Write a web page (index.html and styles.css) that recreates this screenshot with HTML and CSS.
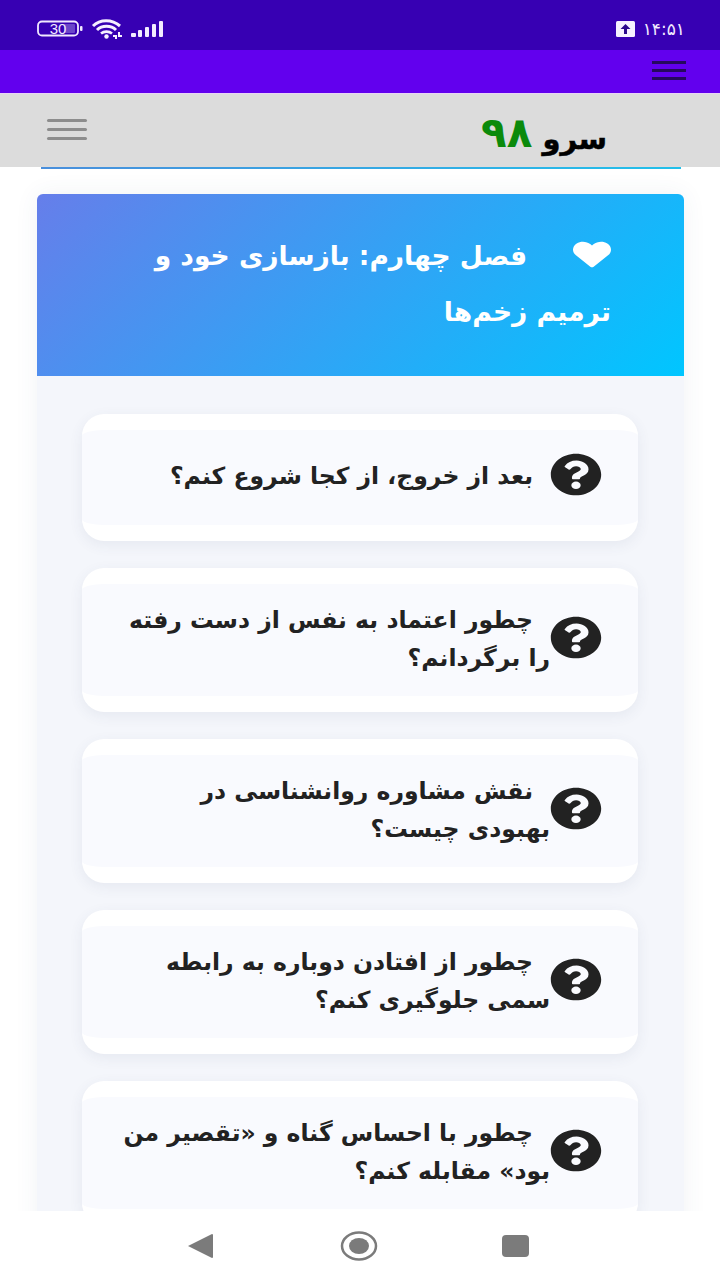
FILE: index.html
```html
<!DOCTYPE html>
<html lang="fa" dir="rtl">
<head>
  <meta charset="UTF-8">
  <title>سرو ۹۸</title>
  <link rel="stylesheet" href="styles.css">
</head>
<body>

  <div class="status-bar">
    <div class="status-left">
      <svg class="battery" width="46" height="18" viewBox="0 0 46 18">
        <rect x="1" y="1.5" width="40" height="14" rx="4" fill="none" stroke="#f1e9ff" stroke-width="1.8"/>
        <rect x="27" y="4" width="11" height="9" rx="1" fill="#6b45c9"/>
        <rect x="43" y="6" width="2.5" height="5" rx="1" fill="#f1e9ff"/>
        <text x="21" y="14" text-anchor="middle" class="battery-text">30</text>
      </svg>
      <svg class="wifi" width="32" height="20" viewBox="0 0 32 20">
        <path d="M2 7 C9 0 21 0 29 7" fill="none" stroke="#f6f0ff" stroke-width="3"/>
        <path d="M6 11 C11 6 20 6 25 11" fill="none" stroke="#f6f0ff" stroke-width="3"/>
        <path d="M10 14.5 C13 12 18 12 21 14.5" fill="none" stroke="#f6f0ff" stroke-width="2.6"/>
        <circle cx="15.5" cy="17.5" r="2.2" fill="#f6f0ff"/>
        <path d="M22 16h4v4h-2v-2h-2zM27 13h2v3h2v2h-4z" fill="#f6f0ff"/>
      </svg>
      <svg class="signal" width="33" height="18" viewBox="0 0 33 18">
        <rect x="0" y="13" width="5" height="4" rx="1" fill="#f3ecff"/>
        <rect x="7" y="10" width="4" height="7" rx="1" fill="#f3ecff"/>
        <rect x="14" y="7" width="4" height="10" rx="1" fill="#f3ecff"/>
        <rect x="21" y="4" width="4" height="13" rx="1" fill="#f3ecff"/>
        <rect x="28" y="1" width="4" height="16" rx="1" fill="#f3ecff"/>
      </svg>
    </div>
    <div class="status-right">
      <svg width="19" height="16" viewBox="0 0 19 16">
        <rect width="19" height="16" rx="1.5" fill="#f6f1ff"/>
        <path d="M9.5 3 L14.5 8 H11 V13 H8 V8 H4.5 Z" fill="#2c0a8c"/>
      </svg>
      <span class="clock">۱۴:۵۱</span>
    </div>
  </div>

  <div class="toolbar">
    <div class="menu-icon menu-dark"><span></span><span></span><span></span></div>
  </div>

  <header class="site-header">
    <div class="logo">سرو <span class="logo-num">۹۸</span></div>
    <div class="menu-icon menu-gray"><span></span><span></span><span></span></div>
  </header>

  <main class="content">
    <div class="prev-edge"></div>

    <section class="chapter">
      <h2 class="chapter-title">
        <svg class="heart" viewBox="0 0 512 512" preserveAspectRatio="none"><path d="M462.3 62.6C407.5 15.9 326 24.3 275.7 76.2L256 96.5l-19.7-20.3C186.1 24.3 104.5 15.9 49.7 62.6c-62.8 53.6-66.1 149.8-9.9 207.9l193.5 199.8c12.5 12.9 32.8 12.9 45.3 0l193.5-199.8c56.3-58.1 53-154.3-9.8-207.9z"/></svg>فصل چهارم: بازسازی خود و ترمیم زخم‌ها
      </h2>

      <div class="questions">
        <a class="card">
          <svg class="q-icon" viewBox="0 0 512 512" preserveAspectRatio="none"><path d="M504 256c0 136.997-111.043 248-248 248S8 392.997 8 256C8 119.083 119.043 8 256 8s248 111.083 248 248zM262.655 90c-54.497 0-89.255 22.957-116.549 63.758-3.536 5.286-2.353 12.415 2.715 16.258l34.699 26.31c5.205 3.947 12.621 3.008 16.665-2.122 17.864-22.658 30.113-35.797 57.303-35.797 20.429 0 45.698 13.148 45.698 32.958 0 14.976-12.363 22.667-32.534 33.976C247.128 238.528 216 254.941 216 296v4c0 6.627 5.373 12 12 12h56c6.627 0 12-5.373 12-12v-1.333c0-28.462 83.186-29.647 83.186-106.667 0-58.002-60.165-102-116.531-102zM256 338c-25.365 0-46 20.635-46 46 0 25.364 20.635 46 46 46s46-20.636 46-46c0-25.365-20.635-46-46-46z"/></svg>
          <p>بعد از خروج، از کجا شروع کنم؟</p>
        </a>
        <a class="card">
          <svg class="q-icon" viewBox="0 0 512 512" preserveAspectRatio="none"><path d="M504 256c0 136.997-111.043 248-248 248S8 392.997 8 256C8 119.083 119.043 8 256 8s248 111.083 248 248zM262.655 90c-54.497 0-89.255 22.957-116.549 63.758-3.536 5.286-2.353 12.415 2.715 16.258l34.699 26.31c5.205 3.947 12.621 3.008 16.665-2.122 17.864-22.658 30.113-35.797 57.303-35.797 20.429 0 45.698 13.148 45.698 32.958 0 14.976-12.363 22.667-32.534 33.976C247.128 238.528 216 254.941 216 296v4c0 6.627 5.373 12 12 12h56c6.627 0 12-5.373 12-12v-1.333c0-28.462 83.186-29.647 83.186-106.667 0-58.002-60.165-102-116.531-102zM256 338c-25.365 0-46 20.635-46 46 0 25.364 20.635 46 46 46s46-20.636 46-46c0-25.365-20.635-46-46-46z"/></svg>
          <p>چطور اعتماد به نفس از دست رفته را برگردانم؟</p>
        </a>
        <a class="card">
          <svg class="q-icon" viewBox="0 0 512 512" preserveAspectRatio="none"><path d="M504 256c0 136.997-111.043 248-248 248S8 392.997 8 256C8 119.083 119.043 8 256 8s248 111.083 248 248zM262.655 90c-54.497 0-89.255 22.957-116.549 63.758-3.536 5.286-2.353 12.415 2.715 16.258l34.699 26.31c5.205 3.947 12.621 3.008 16.665-2.122 17.864-22.658 30.113-35.797 57.303-35.797 20.429 0 45.698 13.148 45.698 32.958 0 14.976-12.363 22.667-32.534 33.976C247.128 238.528 216 254.941 216 296v4c0 6.627 5.373 12 12 12h56c6.627 0 12-5.373 12-12v-1.333c0-28.462 83.186-29.647 83.186-106.667 0-58.002-60.165-102-116.531-102zM256 338c-25.365 0-46 20.635-46 46 0 25.364 20.635 46 46 46s46-20.636 46-46c0-25.365-20.635-46-46-46z"/></svg>
          <p>نقش مشاوره روانشناسی در بهبودی چیست؟</p>
        </a>
        <a class="card">
          <svg class="q-icon" viewBox="0 0 512 512" preserveAspectRatio="none"><path d="M504 256c0 136.997-111.043 248-248 248S8 392.997 8 256C8 119.083 119.043 8 256 8s248 111.083 248 248zM262.655 90c-54.497 0-89.255 22.957-116.549 63.758-3.536 5.286-2.353 12.415 2.715 16.258l34.699 26.31c5.205 3.947 12.621 3.008 16.665-2.122 17.864-22.658 30.113-35.797 57.303-35.797 20.429 0 45.698 13.148 45.698 32.958 0 14.976-12.363 22.667-32.534 33.976C247.128 238.528 216 254.941 216 296v4c0 6.627 5.373 12 12 12h56c6.627 0 12-5.373 12-12v-1.333c0-28.462 83.186-29.647 83.186-106.667 0-58.002-60.165-102-116.531-102zM256 338c-25.365 0-46 20.635-46 46 0 25.364 20.635 46 46 46s46-20.636 46-46c0-25.365-20.635-46-46-46z"/></svg>
          <p>چطور از افتادن دوباره به رابطه سمی جلوگیری کنم؟</p>
        </a>
        <a class="card">
          <svg class="q-icon" viewBox="0 0 512 512" preserveAspectRatio="none"><path d="M504 256c0 136.997-111.043 248-248 248S8 392.997 8 256C8 119.083 119.043 8 256 8s248 111.083 248 248zM262.655 90c-54.497 0-89.255 22.957-116.549 63.758-3.536 5.286-2.353 12.415 2.715 16.258l34.699 26.31c5.205 3.947 12.621 3.008 16.665-2.122 17.864-22.658 30.113-35.797 57.303-35.797 20.429 0 45.698 13.148 45.698 32.958 0 14.976-12.363 22.667-32.534 33.976C247.128 238.528 216 254.941 216 296v4c0 6.627 5.373 12 12 12h56c6.627 0 12-5.373 12-12v-1.333c0-28.462 83.186-29.647 83.186-106.667 0-58.002-60.165-102-116.531-102zM256 338c-25.365 0-46 20.635-46 46 0 25.364 20.635 46 46 46s46-20.636 46-46c0-25.365-20.635-46-46-46z"/></svg>
          <p>چطور با احساس گناه و «تقصیر من بود» مقابله کنم؟</p>
        </a>
      </div>
    </section>
  </main>

  <nav class="nav-bar">
    <svg width="28" height="26" viewBox="0 0 28 26"><path d="M1 13 L25 1 Q26 1 26 2 V24 Q26 25 25 25 Z" fill="#7b7b7b"/></svg>
    <svg width="38" height="30" viewBox="0 0 38 30"><ellipse cx="19" cy="15" rx="17" ry="13.5" fill="none" stroke="#7b7b7b" stroke-width="2.5"/><ellipse cx="19" cy="15" rx="10" ry="8" fill="#7b7b7b"/></svg>
    <svg width="27" height="22" viewBox="0 0 27 22"><rect width="27" height="22" rx="4" fill="#7b7b7b"/></svg>
  </nav>

</body>
</html>
```

FILE: styles.css
```css
* {
  box-sizing: border-box;
}

body {
  margin: 0;
  height: 1280px;
  display: flex;
  flex-direction: column;
  overflow: hidden;
  background-color: #fff;
  color: #222;
  font-family: "DejaVu Sans", "Noto Sans", sans-serif;
}

/* Phone status bar */
.status-bar {
  height: 50px;
  flex-shrink: 0;
  padding: 0 35px 0 37px;
  display: flex;
  direction: ltr;
  align-items: center;
  justify-content: space-between;
  background-color: #3700b3;
}

.status-left {
  display: flex;
  align-items: center;
  gap: 8px;
  margin-top: 8px;
}

.status-right {
  display: flex;
  align-items: center;
  gap: 8px;
  margin-top: 7px;
}

.battery-text {
  font-family: "Liberation Sans", sans-serif;
  font-size: 15px;
  fill: #f1e9ff;
}

.clock {
  color: #f1e9ff;
  font-size: 17px;
  line-height: 18px;
}

.toolbar {
  height: 43px;
  flex-shrink: 0;
  padding: 11px 34px 0;
  background-color: #6200ee;
}

/* Hamburger icons */
.menu-icon {
  width: 34px;
  display: flex;
  flex-direction: column;
  gap: 5px;
}

.menu-icon span {
  height: 3px;
  background-color: #26095e;
}

.menu-gray {
  width: 40px;
  gap: 6px;
}

.menu-gray span {
  background-color: #8d8d8d;
  border-radius: 2px;
}

/* Site header */
.site-header {
  height: 74px;
  flex-shrink: 0;
  padding: 0 113px 0 47px;
  display: flex;
  align-items: center;
  justify-content: space-between;
  background-color: #dcdcdc;
  border-top: 1px solid #e8d4f6;
}

.logo {
  color: #000;
  font-size: 29px;
  font-weight: bold;
  line-height: 44px;
  margin-top: 16px;
  -webkit-text-stroke: 0.5px #000;
}

.logo-num {
  color: #0b8a0b;
  font-size: 42px;
  line-height: 30px;
  -webkit-text-stroke: 0;
  vertical-align: 2px;
}

.site-header .menu-icon {
  margin-bottom: 2px;
}

/* Page content */
.content {
  flex: 1;
  min-height: 0;
  overflow: hidden;
  padding: 0 36px 0 37px;
}

.prev-edge {
  height: 2px;
  margin: 0 3px 25px 4px;
  background: linear-gradient(to left, #22c0ea, #4a8fdc);
}

.chapter {
  background-color: #f4f6fb;
  box-shadow: 0 0 24px rgba(60, 80, 120, 0.07);
  border-radius: 6px 6px 0 0;
  min-height: 1100px;
}

.chapter-title {
  margin: 0;
  height: 182px;
  padding: 34px 73px 0 60px;
  color: #fff;
  font-size: 26.5px;
  font-weight: bold;
  line-height: 56px;
  border-radius: 6px 6px 0 0;
  background: linear-gradient(135deg, #667eea, #00c6ff);
}

.heart {
  width: 38px;
  height: 29px;
  fill: #fff;
  margin-left: 46px;
  vertical-align: -4px;
}

.questions {
  padding: 38px 46px 0 45px;
  display: flex;
  flex-direction: column;
  gap: 27px;
}

.card {
  min-height: 127px;
  padding: 16.5px 36px;
  display: flex;
  align-items: center;
  background-color: #f9fafe;
  border-top: 16px solid #fff;
  border-bottom: 16px solid #fff;
  border-radius: 22px;
  box-shadow: 0 4px 14px rgba(60, 80, 120, 0.08);
}

.q-icon {
  width: 52px;
  height: 43px;
  flex-shrink: 0;
  fill: #222;
  margin-bottom: 6px;
}

.card p {
  margin: 0 0 3px;
  font-size: 23.5px;
  font-weight: bold;
  line-height: 38px;
  text-indent: 17px;
}

/* Phone navigation bar */
.nav-bar {
  height: 69px;
  flex-shrink: 0;
  padding: 0 191px 0 187px;
  direction: ltr;
  display: flex;
  align-items: center;
  justify-content: space-between;
  background-color: #fff;
}
```
